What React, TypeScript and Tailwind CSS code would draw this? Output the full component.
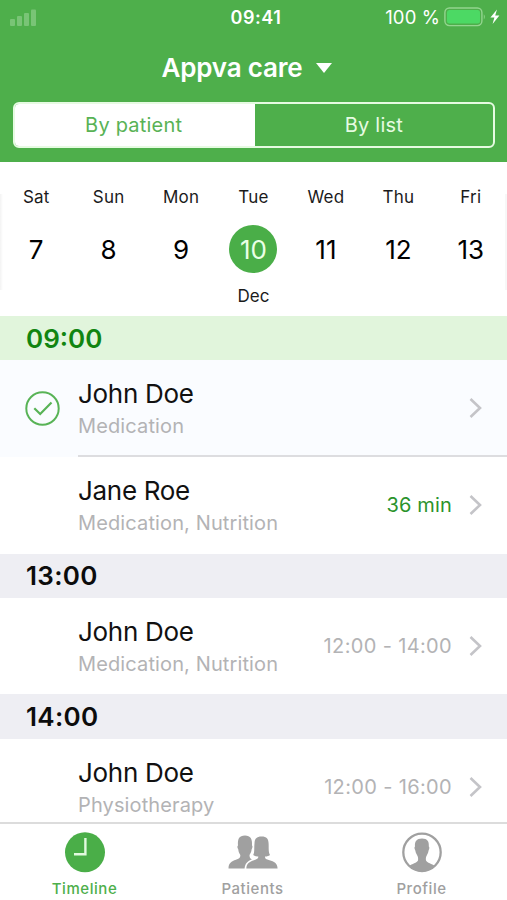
import clsx from "clsx";

type Visit = {
    name: string;
    tasks: string;
    time?: string;
    due?: boolean;
    done?: boolean;
}

type Slot = {
    hour: string;
    active?: boolean;
    visits: Visit[];
}

const days = [
    { label: "Sat", date: 7 },
    { label: "Sun", date: 8 },
    { label: "Mon", date: 9 },
    { label: "Tue", date: 10, month: "Dec" },
    { label: "Wed", date: 11 },
    { label: "Thu", date: 12 },
    { label: "Fri", date: 13 },
];

const slots: Slot[] = [
    {
        hour: "09:00",
        active: true,
        visits: [
            { name: "John Doe", tasks: "Medication", done: true },
            { name: "Jane Roe", tasks: "Medication, Nutrition", time: "36 min", due: true },
        ],
    },
    {
        hour: "13:00",
        visits: [
            { name: "John Doe", tasks: "Medication, Nutrition", time: "12:00 - 14:00" },
        ],
    },
    {
        hour: "14:00",
        visits: [
            { name: "John Doe", tasks: "Physiotherapy", time: "12:00 - 16:00" },
        ],
    },
];

function StatusBar(){
    return(
    <div className="grid h-[34px] grid-cols-3 items-center pl-[10px] pr-[7px] text-white">
        <svg width="27" height="17" viewBox="0 0 27 17" fill="#79c476">
            <rect x="0" y="10" width="5" height="7" rx="1" />
            <rect x="7" y="7" width="5" height="10" rx="1" />
            <rect x="14" y="4" width="5" height="13" rx="1" />
            <rect x="21" y="0.5" width="5" height="16.5" rx="1" />
        </svg>
        <span className="pt-px pl-[2px] text-center text-[18px] leading-none font-semibold tracking-[0.6px]">09:41</span>
        <div className="flex items-center justify-end">
            <span className="mr-[4px] text-[18.5px] leading-none tracking-[0.1px] whitespace-nowrap">100 %</span>
            <svg width="56" height="20" viewBox="0 0 56 20">
                <rect x="0.9" y="1" width="37" height="17.6" rx="4.5" fill="none" stroke="#93d58f" strokeWidth="1.4" />
                <rect x="3" y="3" width="33" height="13.6" rx="2.5" fill="#4cd964" />
                <path d="M39.8 7.2 q2 2.6 0 5.2z" fill="#93d58f" />
                <path d="M53 2.6 L46.4 10.6 H50.4 L48.6 17 L55.4 8.6 H51.2z" fill="#fff" />
            </svg>
        </div>
    </div>
    )
}

function Header(){
    return(
    <header className="h-[162px] bg-[#4eaf4b]">
        <StatusBar />
        <div className="flex h-[67px] items-center justify-center gap-[14px] pr-[13px] text-white">
            <h1 className="text-[26px] leading-none font-semibold tracking-[-0.2px]">Appva care</h1>
            <svg width="16" height="10" viewBox="0 0 16 10" fill="#fff">
                <path d="M0 0h16L8 10z" />
            </svg>
        </div>
        <div className="mr-[12px] ml-[12.5px] mt-[1px] flex h-[46px] overflow-hidden rounded-[6px] border-2 border-[#e6fbe2] text-[20px] leading-none tracking-[0.2px]">
            <button className="flex-1 bg-white pr-[2px] text-[#58b255]">By patient</button>
            <button className="flex-1 text-[#e6fbe2]">By list</button>
        </div>
    </header>
    )
}

function Calendar(){
    return(
    <div className="relative h-[154px] bg-white">
        <div className="grid grid-cols-7 text-center text-[#1b1b1b]">
            {days.map((day) => (
                <div key={day.label} className="flex flex-col items-center pt-[26px]">
                    <span className="text-[17px] leading-[18px] tracking-[0.2px]">{day.label}</span>
                    <span className={clsx(
                        "mt-[19px] flex size-[48px] items-center justify-center rounded-full pt-[2px] text-[26px] leading-none",
                        day.month ? "bg-[#4aae48] text-[#e9ffe6]" : "text-black"
                    )}>
                        {day.date}
                    </span>
                    {day.month && <span className="mt-[14px] text-[17px] leading-[18px]">{day.month}</span>}
                </div>
            ))}
        </div>
        <div className="absolute top-[32px] left-0 h-[96px] w-[3px] bg-linear-to-r from-[#f3f3f3] to-white" />
        <div className="absolute top-[32px] right-0 h-[96px] w-[2px] bg-[#f7f7f7]" />
    </div>
    )
}

function VisitRow({ visit, divider }: { visit: Visit; divider: boolean }){
    return(
    <div className={clsx("flex", divider ? "h-[97px]" : "h-[96.5px]", visit.done ? "bg-[#fafcff]" : "bg-white")}>
        <div className="flex w-[78px] shrink-0 items-center pl-[25px]">
            {visit.done && (
                <svg width="35" height="35" viewBox="0 0 35 35" fill="none" stroke="#58b356">
                    <circle cx="17.5" cy="17.5" r="16.2" strokeWidth="2" />
                    <path d="M9.3 17.2 L15.2 23 L26.5 11.6" strokeWidth="2.2" />
                </svg>
            )}
        </div>
        <div className={clsx("flex flex-1 items-center pr-[25px]", divider && "border-b-2 border-[#dddde0]")}>
            <div className="flex-1 pt-[4px]">
                <div className="text-[26px] leading-[32px] tracking-[-0.3px] text-[#111]">{visit.name}</div>
                <div className="text-[20px] leading-[32px] tracking-[0.12px] text-[#b3b3b5]">{visit.tasks}</div>
            </div>
            {visit.time && (
                <span className={clsx("text-[20px] leading-[28px]", visit.due ? "tracking-[0.15px] text-[#2b932b]" : "tracking-[0.35px] text-[#b3b3b5]")}>{visit.time}</span>
            )}
            <svg className="ml-[17px]" width="13" height="20" viewBox="0 0 13 20" fill="none" stroke="#c4c4c8" strokeWidth="2.6">
                <path d="M1.5 1 L11 10 L1.5 19" />
            </svg>
        </div>
    </div>
    )
}

function TabBar(){
    return(
    <nav className="grid h-[78px] shrink-0 grid-cols-[169px_167px_1fr] border-t-2 border-[#dcdcdc] bg-white text-center text-[15px] leading-none font-medium tracking-[0.55px]">
        <div className="flex flex-col items-center pt-[8px] text-[#4eaf4b]">
            <svg width="40" height="41" viewBox="0 0 40 41">
                <circle cx="20" cy="20.3" r="20" fill="#4aae48" />
                <path d="M20.4 6 V22.3 H9" fill="none" stroke="#e2fadf" strokeWidth="2.4" />
            </svg>
            <span className="mt-[8px]">Timeline</span>
        </div>
        <div className="flex flex-col items-center pt-[8px] text-[#a0a0a0]">
            <svg width="50" height="41" viewBox="0 0 50 41" fill="#a0a0a0">
                <path d="M0.5 36.5 C0.5 31 3.5 29.3 8 27.700 C11 26.700 12.500 26 12.300 23 C11 21 10.500 19.500 10.300 17.500 C9 15.500 9.300 14 10 13.500 C9.500 7 11 3.500 17 3.500 C22.500 3.500 24.500 7 24 13.500 C24.700 14 24.700 15.500 23.600 17.500 C23.400 19.500 22.800 21 21.500 23 C21.500 25.500 22 26.500 24 27.300 C19.500 29.200 17 31.500 16.600 36.500z" />
                <path d="M18.3 36.5 C18.6 31.5 21.5 29.8 26 28.300 C29 27.300 30.500 26.700 30.300 24.500 C28 24.600 26.500 24 25.200 23 C26.800 20.500 26 15 26.500 11.500 C26.700 6.500 28.500 4.500 33.600 4.500 C38.700 4.500 40.500 7 40.600 11.500 C40.900 15 40.200 20 42 23 C40.500 24 39 24.600 37 24.500 C36.900 26.700 38 27.300 41.500 28.300 C46 29.500 49.300 31 49.600 36.500z" />
            </svg>
            <span className="mt-[8px]">Patients</span>
        </div>
        <div className="flex flex-col items-center pt-[8px] text-[#a0a0a0]">
            <svg width="40" height="41" viewBox="0 0 40 41">
                <circle cx="20" cy="20.3" r="18.7" fill="none" stroke="#a0a0a0" strokeWidth="2.3" />
                <path d="M7 34 C10 31.800 15 31 16 28.500 C16.400 26.500 16 24.500 15 23 C14 21.500 13.500 20 13.300 18.500 C12.200 16.500 12.300 15 13 14.500 C12.500 9.500 14.500 6.500 20 6.500 C25.500 6.500 27.300 9.500 26.800 14.500 C27.500 15 27.600 16.500 26.600 18.500 C26.400 20 25.900 21.500 25 23 C24 24.500 23.600 26.500 24 28.500 C25 31 30 31.800 33 34 C29 38 24.500 39.500 20 39.500 C15.500 39.500 11 38 7 34z" fill="#a0a0a0" />
            </svg>
            <span className="mt-[8px]">Profile</span>
        </div>
    </nav>
    )
}

export default function App(){
    return(
    <div className="flex h-[900px] w-[507px] flex-col overflow-hidden bg-white font-[Inter,sans-serif]">
        <Header />
        <Calendar />
        <main className="min-h-0 flex-1 overflow-hidden">
            {slots.map((slot) => (
                <section key={slot.hour}>
                    <h2 className={clsx(
                        "flex items-center pt-px pl-[26px] text-[26px] leading-none font-semibold",
                        slot.active ? "h-[44px] bg-[#e1f5dc] text-[#118511]" : "h-[44.4px] bg-[#eeeef3] tracking-[0.3px] text-[#0c0c0c]"
                    )}>
                        {slot.hour}
                    </h2>
                    {slot.visits.map((visit, i) => (
                        <VisitRow key={i} visit={visit} divider={i < slot.visits.length - 1} />
                    ))}
                </section>
            ))}
        </main>
        <TabBar />
    </div>
    )
}
